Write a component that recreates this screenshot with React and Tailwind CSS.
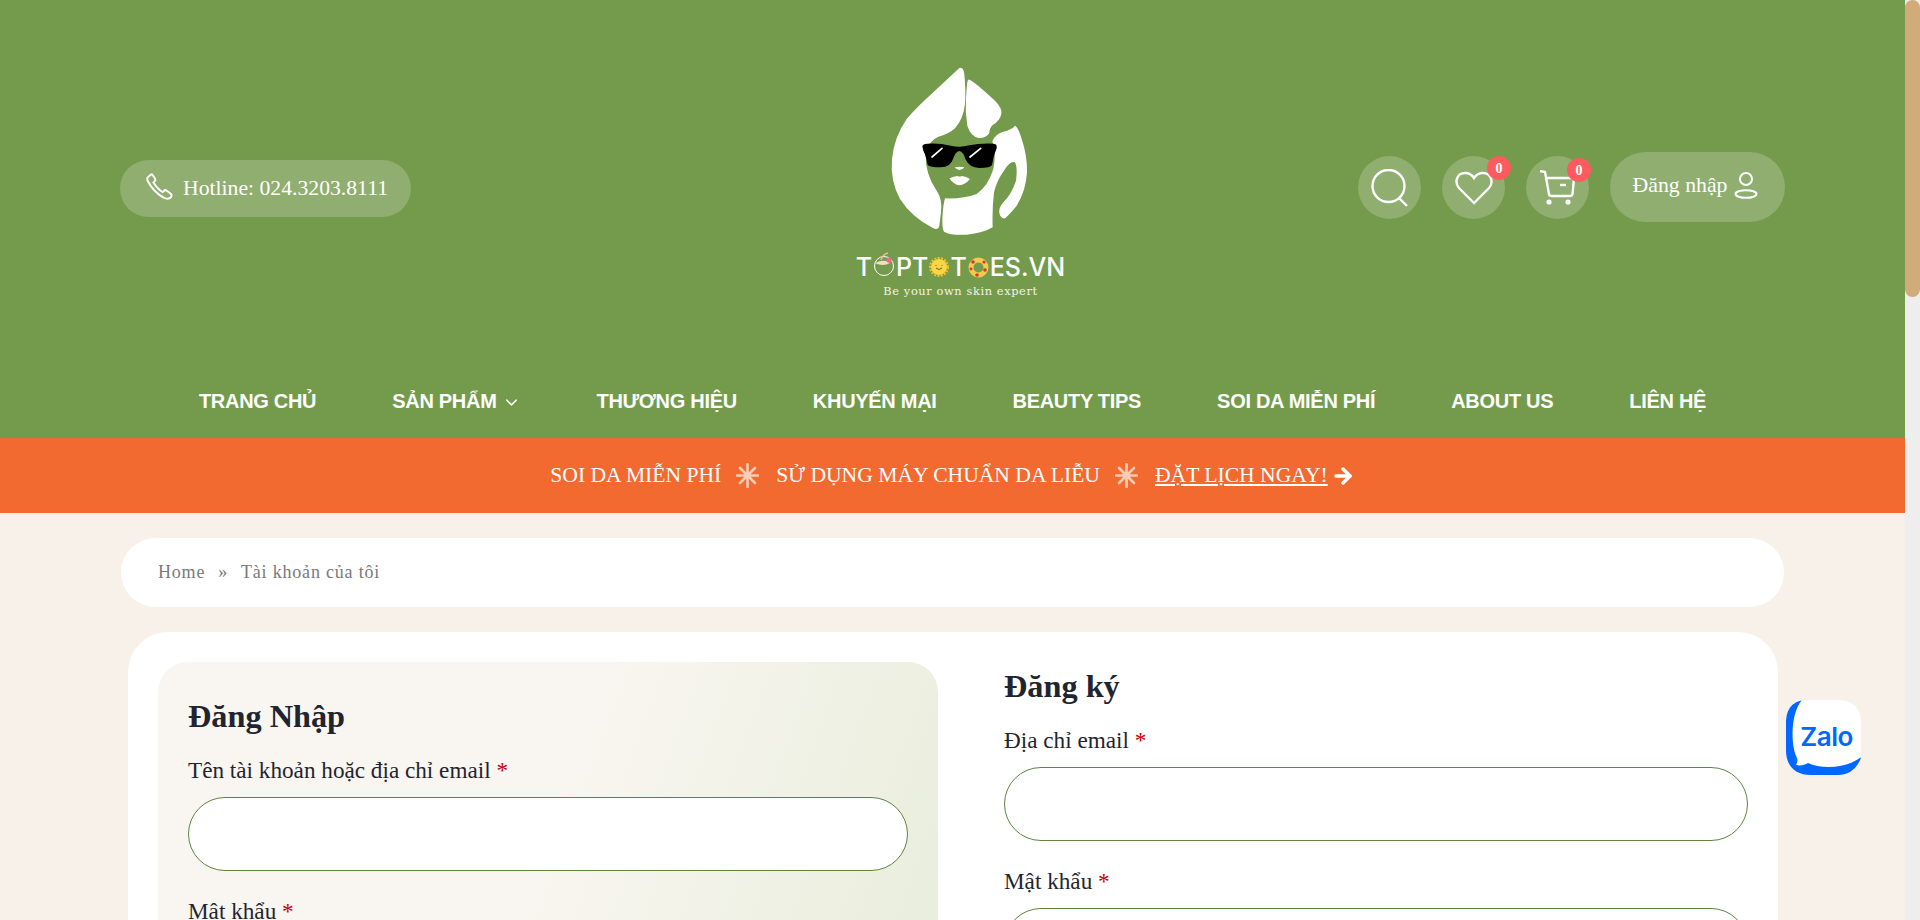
import React from 'react';
import { ChevronDown, ArrowRight } from 'lucide-react';

const navItems = ['TRANG CHỦ', 'SẢN PHẨM', 'THƯƠNG HIỆU', 'KHUYẾN MẠI', 'BEAUTY TIPS', 'SOI DA MIỄN PHÍ', 'ABOUT US', 'LIÊN HỆ'];

const Logo = () => (
  <div className="flex flex-col items-center mb-[18px]">
    <svg width="160" height="180" viewBox="0 0 480 540">
      <path fill="#fff" d="M238 27 Q250 22 253 45 Q258 100 255 135 Q250 180 225 208 Q205 226 175 233 Q145 245 137 285 Q135 345 170 395 Q188 420 183 460 L178 500 Q175 514 160 508 Q95 475 60 420 Q30 365 36 300 Q42 235 80 180 Q110 145 160 100 Z" />
      <path fill="#fff" d="M268 62 Q280 65 345 125 Q367 147 364 165 Q360 185 338 198 Q328 208 328 222 Q318 238 296 237 Q272 232 262 200 Q255 160 258 120 Q260 85 262 70 Q263 60 268 62 Z" />
      <path fill="#fff" d="M405 200 Q415 205 425 240 Q442 290 441 340 Q438 395 410 440 Q390 465 375 478 Q362 480 358 462 Q356 445 370 430 Q395 405 408 365 Q413 325 405 310 Q390 305 372 335 Q350 365 342 400 Q336 450 338 505 Q310 522 260 527 Q215 530 192 518 Q185 505 188 465 Q190 435 195 418 Q250 420 290 405 Q325 380 340 330 Q350 280 337 247 Q345 225 370 218 Q395 212 405 200 Z" />
      <path fill="#000" d="M127 262 Q128 255 142 254 Q180 252 212 260 Q240 267 268 259 Q300 252 342 254 Q352 255 350 268 Q340 290 336 318 Q332 327 298 327 Q268 326 256 300 Q250 278 238 276 Q226 278 220 298 Q212 326 180 325 Q150 325 143 318 Q138 290 130 275 Z" />
      <path stroke="#fff" strokeWidth="5" strokeLinecap="round" d="M156 294 L186 268 M270 294 L302 268" />
      <path fill="#fff" d="M224 325 Q238 322 253 325 Q248 333 238 333 Q230 333 224 325 Z" />
      <path fill="#fff" d="M208 358 Q222 352 232 351 Q238 354 246 351 Q258 353 270 360 Q255 378 238 379 Q222 378 208 358 Z" />
    </svg>
    <div className="flex items-center mt-[17px] h-[22px] font-['Inter',sans-serif] font-medium text-[25px] leading-none text-white">
      <span>T</span>
      <svg width="22" height="26" viewBox="0 0 22 26" className="mx-[1px] -mt-[6px]">
        <circle cx="11" cy="15" r="9.5" fill="none" stroke="#fff" strokeWidth="1" />
        <path fill="#f6dcc4" d="M2 12 Q8 9 13 10 L17 12 Q10 16 2 12 Z" />
        <path stroke="#f3b9a0" strokeWidth="1.5" fill="none" d="M8 9 Q10 3 15 2" />
        <circle cx="16" cy="9" r="2.6" fill="#f2668b" />
      </svg>
      <span>PT</span>
      <svg width="20" height="20" viewBox="0 0 20 20" className="mx-[1px]">
        <circle cx="10" cy="10" r="8" fill="#f9d648" />
        <circle cx="10" cy="10" r="9" fill="none" stroke="#f3c01f" strokeWidth="2" strokeDasharray="2 1.4" />
        <path stroke="#7a5a10" strokeWidth="1" fill="none" d="M7 11 Q10 14 13 11 M7 8 V8.8 M13 8 V8.8" />
      </svg>
      <span>T</span>
      <svg width="21" height="21" viewBox="0 0 21 21" className="mx-[1px]">
        <circle cx="10.5" cy="10.5" r="7.5" fill="none" stroke="#f3c94f" strokeWidth="5" />
        <circle cx="5" cy="5" r="1.8" fill="#d5392f" />
        <circle cx="16" cy="5" r="1.6" fill="#d5392f" />
        <circle cx="17" cy="13" r="1.8" fill="#d5392f" />
        <circle cx="9" cy="18" r="1.8" fill="#d5392f" />
        <circle cx="3" cy="12" r="1.4" fill="#d5392f" />
      </svg>
      <span>ES.VN</span>
    </div>
    <div className="mt-[6px] font-['DejaVu_Serif',serif] text-[11.4px] leading-[14px] tracking-[0.6px] text-[#f5f3e6]">Be your own skin expert</div>
  </div>
);

const Sparkle = () => (
  <svg width="23" height="25" viewBox="0 0 23 25" className="ml-[15px] mr-[17px] shrink-0">
    <path stroke="#fbcdb6" strokeWidth="2.6" strokeLinecap="round" d="M11.5 1 V24 M1 12.5 H22 M4 5 L19 20 M19 5 L4 20" />
  </svg>
);

const Badge = ({ className }) => (
  <span className={`absolute flex items-center justify-center w-6 h-6 rounded-full bg-[#ff5a5f] text-white text-[14px] font-bold ${className}`}>0</span>
);

const Field = ({ label }) => (
  <div className="mb-[25px]">
    <label className="block text-[23.2px] leading-[30px] text-[#1f2530] mb-[12px]">
      {label} <span className="text-[#c40000]">*</span>
    </label>
    <div className="h-[74px] rounded-[37px] border border-[#5f8440] bg-white" />
  </div>
);

export default function App() {
  return (
    <div className="relative flex h-screen overflow-hidden bg-[#f8f1ea] font-['Liberation_Serif',serif]">
      <div className="flex-1 min-w-0 overflow-hidden">
        {/* Header */}
        <header className="bg-[#739b4b] text-white">
          <div className="grid grid-cols-[291px_1fr_427px] items-center h-[375px] px-[120px]">
            <div className="flex items-center h-[57px] mt-[1px] rounded-[29px] bg-[#8fae6f] pl-[26px]">
              <svg width="27" height="27" viewBox="0 0 27 27" fill="none" stroke="#fff" strokeWidth="2" className="-mt-[3px]">
                <path d="M5 1.5 L1.8 4.3 C1 5.5 1.2 7 2 8.5 C5 14 11 21 17.5 24.5 C20 26 22 26 24 25 C25.5 24 26 22 25 21 L20.5 17.5 C19.5 17 18.5 17 18 18 L16.5 19 C13 17 9 12 7.5 9.5 L9 8 C9.5 7 9.5 6.5 9 5.5 L6.5 1.8 C6 1.3 5.5 1.2 5 1.5 Z" />
              </svg>
              <span className="ml-[10px] mt-[1px] text-[21.7px] whitespace-nowrap">Hotline: 024.3203.8111</span>
            </div>
            <div className="flex justify-center pl-[152px]">
              <Logo />
            </div>
            <div className="flex items-center gap-[21px]">
              <div className="relative flex items-center justify-center w-[63px] h-[63px] rounded-full bg-[#8fae6f]">
                <svg width="38" height="38" viewBox="0 0 38 38" fill="none" stroke="#fff" strokeWidth="2.4">
                  <circle cx="17.5" cy="17" r="16" />
                  <path d="M28 29 L36 37" />
                </svg>
              </div>
              <div className="relative flex items-center justify-center w-[63px] h-[63px] rounded-full bg-[#8fae6f]">
                <svg width="38" height="34" viewBox="0 0 38 34" fill="none" stroke="#fff" strokeWidth="2.4">
                  <path d="M19 32 L4 17 C-1 11 2 2 10 2 C14 2 17 4 19 7 C21 4 24 2 28 2 C36 2 39 11 34 17 Z" />
                </svg>
                <Badge className="top-0 right-[-6px]" />
              </div>
              <div className="relative flex items-center justify-center w-[63px] h-[63px] rounded-full bg-[#8fae6f]">
                <svg width="36" height="36" viewBox="0 0 36 36" fill="none" stroke="#fff" strokeWidth="2.4" className="-ml-[2px]">
                  <path d="M1 1 L6 2 L10 24 Q10 26 13 26 L31 26 Q33 26 33.5 24 L35 8 L7 8" />
                  <path d="M21 15 L27 15" />
                  <circle cx="10" cy="32" r="2.6" fill="#fff" stroke="none" />
                  <circle cx="29" cy="32" r="2.6" fill="#fff" stroke="none" />
                </svg>
                <Badge className="top-[2px] right-[-2px]" />
              </div>
              <div className="flex items-center justify-center w-[175px] h-[70px] -mt-[1px] pr-[5px] rounded-[35px] bg-[#8fae6f]">
                <span className="text-[21.8px] -mt-[3px] whitespace-nowrap">Đăng nhập</span>
                <svg width="24" height="28" viewBox="0 0 24 28" fill="none" stroke="#fff" strokeWidth="2" className="ml-[6px] -mt-[2px]">
                  <circle cx="12" cy="7" r="6" />
                  <ellipse cx="12" cy="22" rx="10.5" ry="3.8" />
                </svg>
              </div>
            </div>
          </div>
          <nav className="flex items-center justify-center gap-[76px] h-[63px] pb-[11px] font-['Liberation_Sans',sans-serif] font-bold text-[20px] tracking-[-0.3px]">
            {navItems.map((item) => (
              <span key={item} className="flex items-center whitespace-nowrap">
                {item}
                {item === 'SẢN PHẨM' && <ChevronDown size={19} strokeWidth={1.8} className="ml-[5px] mt-[2px]" />}
              </span>
            ))}
          </nav>
        </header>

        {/* Promo bar */}
        <div className="flex items-center justify-center h-[75px] bg-[#f36a30] text-white text-[21.6px]">
          <span>SOI DA MIỄN PHÍ</span>
          <Sparkle />
          <span>SỬ DỤNG MÁY CHUẨN DA LIỄU</span>
          <Sparkle />
          <span className="underline">ĐẶT LỊCH NGAY!</span>
          <ArrowRight size={24} strokeWidth={3.5} className="ml-[3px]" />
        </div>

        {/* Breadcrumb */}
        <div className="flex items-center h-[69px] mt-[25px] ml-[121px] mr-[121px] rounded-[35px] bg-white pl-[37px] text-[18px] tracking-[0.8px] text-[#7a7a7a]">
          <span>Home</span>
          <span className="mx-[13px]">»</span>
          <span>Tài khoản của tôi</span>
        </div>

        {/* Account forms */}
        <div className="flex gap-[66px] mt-[25px] ml-[128px] mr-[127px] p-[30px] rounded-[40px] bg-white">
          <div className="w-[780px] h-[520px] shrink-0 rounded-[30px] p-[30px] bg-[linear-gradient(110deg,#f9f6f1_45%,#e6ecd8_100%)]">
            <h2 className="text-[32.3px] leading-[40px] font-bold text-[#1f2530] mt-[4px] mb-[19px]">Đăng Nhập</h2>
            <Field label="Tên tài khoản hoặc địa chỉ email" />
            <Field label="Mật khẩu" />
          </div>
          <div className="flex-1">
            <h2 className="text-[32.3px] leading-[40px] font-bold text-[#1f2530] mt-[4px] mb-[19px]">Đăng ký</h2>
            <Field label="Địa chỉ email" />
            <Field label="Mật khẩu" />
          </div>
        </div>
      </div>

      {/* Scrollbar */}
      <div className="w-[15px] shrink-0 bg-[#eeeeee]">
        <div className="h-[297px] rounded-[8px] bg-[#d2ab7a]" />
      </div>

      {/* Zalo chat button */}
      <div className="absolute left-[1786px] top-[700px] flex items-center justify-center w-[75px] h-[75px]">
        <svg width="75" height="75" viewBox="0 0 75 75" className="absolute inset-0">
          <path fill="#0068ff" d="M22 0 C7 0 0 8 0 24 V50 C0 66 9 75 25 75 H52 C62 75 70 70 75 58 L40 30 Z" />
          <path fill="#fff" d="M16 0 C5 12 4 45 11 58 C12 61 11 63 10 65 C14 66 19 65 22 63 C35 69 60 69 75 57 V22 C75 8 66 0 52 0 Z" />
        </svg>
        <span className="relative ml-[6px] -mt-[2px] font-['Inter',sans-serif] font-semibold text-[26px] text-[#0068ff] tracking-[-0.5px]">Zalo</span>
      </div>
    </div>
  );
}
